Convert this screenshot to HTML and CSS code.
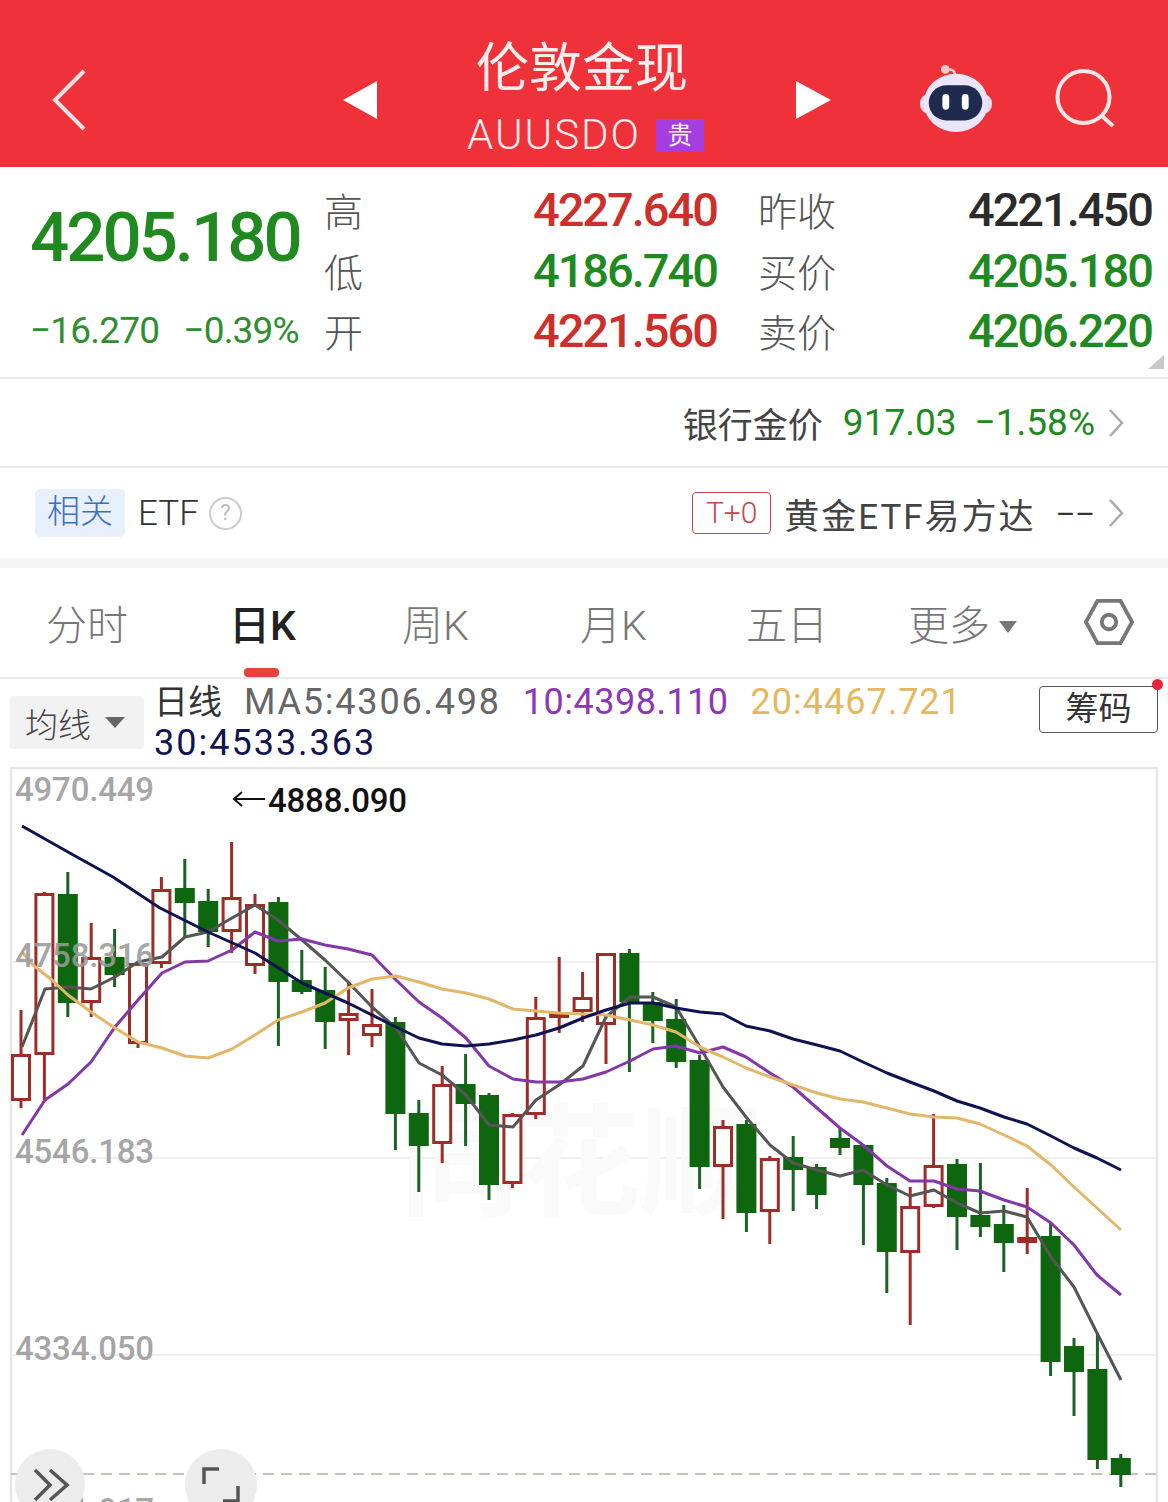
FILE: index.html
```html
<!DOCTYPE html>
<html lang="zh-CN">
  <head>
    <meta charset="UTF-8" />
    <meta name="viewport" content="width=device-width, initial-scale=1.0" />
    <title>伦敦金现</title>
    <link rel="stylesheet" href="styles.css">
  </head>
  <body>
    <div class="page">
      <div class="top-bar">
        <svg class="back-icon" viewBox="0 0 36 62"><path d="M33 2 L4 31 L33 60" /></svg>
        <svg class="nav-arrow" viewBox="0 0 34 38"><path d="M34 0 V38 L0 19 Z" /></svg>
        <div class="title-block">
          <h1>伦敦金现</h1>
          <div class="code-line">
            <span>AUUSDO</span>
            <span class="code-badge">贵</span>
          </div>
        </div>
        <svg class="nav-arrow" viewBox="0 0 35 38"><path d="M0 0 V38 L35 19 Z" /></svg>
        <svg class="robot-icon" viewBox="0 0 74 72">
          <path class="robot-antenna" d="M36 13 C36 7 32 6 27 7" />
          <circle class="robot-ball" cx="26" cy="6.5" r="4.5" />
          <rect class="robot-ear" x="0" y="32" width="74" height="20" rx="9" />
          <ellipse class="robot-head" cx="37" cy="41" rx="33" ry="30" />
          <rect class="robot-face" x="9" y="23" width="55" height="36" rx="18" />
          <rect class="robot-eye" x="23" y="32" width="7" height="16" rx="3.5" />
          <rect class="robot-eye" x="43" y="32" width="7" height="16" rx="3.5" />
        </svg>
        <svg class="search-icon" viewBox="0 0 62 62"><circle cx="28.500" cy="28" r="26" /><path d="M47 47 L58 57" /></svg>
      </div>

      <div class="quote">
        <div class="quote-main">
          <div class="last-price">4205.180</div>
          <div class="change">
            <span>−16.270</span>
            <span>−0.39%</span>
          </div>
        </div>
        <div class="quote-label">高</div>
        <div class="quote-value rise">4227.640</div>
        <div class="quote-label wide">昨收</div>
        <div class="quote-value flat">4221.450</div>
        <div class="quote-label">低</div>
        <div class="quote-value fall">4186.740</div>
        <div class="quote-label wide">买价</div>
        <div class="quote-value fall">4205.180</div>
        <div class="quote-label">开</div>
        <div class="quote-value rise">4221.560</div>
        <div class="quote-label wide">卖价</div>
        <div class="quote-value fall">4206.220</div>
        <span class="corner-mark"></span>
      </div>

      <div class="info-row bank-row">
        <span class="info-name">银行金价</span>
        <span class="bank-num fall">917.03</span>
        <span class="bank-num fall">−1.58%</span>
        <svg class="row-chevron" viewBox="0 0 16 30"><path d="M2 2 L14 15 L2 28" /></svg>
      </div>

      <div class="info-row etf-row">
        <span class="tag">相关</span>
        <span class="etf-name">ETF</span>
        <span class="help-mark">?</span>
        <span class="t-zero">T+0</span>
        <span class="info-name fund-name">黄金ETF易方达</span>
        <span class="fund-dash">––</span>
        <svg class="row-chevron" viewBox="0 0 16 30"><path d="M2 2 L14 15 L2 28" /></svg>
      </div>

      <div class="tabs">
        <span class="tab tab-time">分时</span>
        <span class="tab tab-day active">日K</span>
        <span class="tab tab-week">周K</span>
        <span class="tab tab-month">月K</span>
        <span class="tab tab-five">五日</span>
        <span class="tab tab-more">更多<i class="more-caret"></i></span>
        <svg class="gear-icon" viewBox="0 0 52 48">
          <path d="M14 2 H38 L50 24 L38 46 H14 L2 24 Z" />
          <circle cx="26" cy="24" r="7.500" />
        </svg>
      </div>

      <div class="legend">
        <div class="ma-select">均线<i class="ma-caret"></i></div>
        <div class="legend-text">
          <span class="legend-name">日线</span>
          <span class="ma5">MA5:4306.498</span>
          <span class="ma10">10:4398.110</span>
          <span class="ma20">20:4467.721</span>
          <span class="ma30">30:4533.363</span>
        </div>
        <div class="chip-btn">筹码</div>
      </div>

      <svg class="chart" viewBox="0 767 1168 735">
        <path class="frame" d="M11 1502 V768 H1157 V1502" />
        <path class="grid" d="M11 962 H1157 M11 1158 H1157 M11 1355 H1157" />
        <text class="watermark" x="400" y="1206">同花顺</text>
        <path class="dash" d="M11 1474 H1157" />

        <path class="wick-red" d="M21 1010V1108M44.400 892V1100M91.200 923V1017M138 962V1048M161.400 877V968M231.600 842V953M255 894V974M348.600 982V1055M372 989V1047M442.200 1066V1163M512.400 1113V1188M535.800 997V1119M559.200 957V1033M582.600 972V1022M606 953V1064M723 1120V1219M769.800 1156V1244M910.200 1187V1325M933.600 1114V1208M1027.200 1188V1254" />
        <path class="wick-green" d="M67.800 872V1017M114.600 929V987M184.800 859V937M208.200 889V947M278.400 897V1046M301.800 950V994M325.200 967V1049M395.400 1017V1150M418.800 1100V1192M465.600 1054V1146M489 1093V1200M629.400 949V1072M652.800 992V1043M676.200 999V1068M699.600 1055V1189M746.400 1120V1232M793.200 1136V1211M816.600 1164V1209M840 1128V1155M863.400 1145V1245M886.800 1178V1293M957 1159V1250M980.400 1163V1237M1003.800 1205V1272M1050.600 1223V1376M1074 1338V1416M1097.400 1333V1469M1120.800 1454V1487" />

        <g class="body-red">
          <rect x="12.500" y="1055.500" width="17" height="44" />
          <rect x="35.900" y="894.500" width="17" height="159" />
          <rect x="82.700" y="958.500" width="17" height="43" />
          <rect x="129.500" y="964.500" width="17" height="78" />
          <rect x="152.900" y="890.500" width="17" height="72" />
          <rect x="223.100" y="898.500" width="17" height="32" />
          <rect x="246.500" y="905.500" width="17" height="59" />
          <rect x="340.100" y="1014.500" width="17" height="5" />
          <rect x="363.500" y="1025.500" width="17" height="9" />
          <rect x="433.700" y="1085.500" width="17" height="57" />
          <rect x="503.900" y="1115.500" width="17" height="67" />
          <rect x="527.300" y="1018.500" width="17" height="95" />
          <rect x="550.700" y="1013.500" width="17" height="3" />
          <rect x="574.100" y="998.500" width="17" height="12" />
          <rect x="597.500" y="954.500" width="17" height="69" />
          <rect x="714.500" y="1127.500" width="17" height="38" />
          <rect x="761.300" y="1159.500" width="17" height="51" />
          <rect x="901.700" y="1207.500" width="17" height="44" />
          <rect x="925.100" y="1166.500" width="17" height="39" />
          <rect x="1018.700" y="1238.500" width="17" height="3" />
        </g>
        <g class="body-green">
          <rect x="57.800" y="894" width="20" height="109" />
          <rect x="104.600" y="957" width="20" height="18" />
          <rect x="174.800" y="888" width="20" height="15" />
          <rect x="198.200" y="901" width="20" height="31" />
          <rect x="268.400" y="902" width="20" height="80" />
          <rect x="291.800" y="980" width="20" height="12" />
          <rect x="315.200" y="990" width="20" height="32" />
          <rect x="385.400" y="1022" width="20" height="92" />
          <rect x="408.800" y="1113" width="20" height="33" />
          <rect x="455.600" y="1084" width="20" height="20" />
          <rect x="479" y="1095" width="20" height="90" />
          <rect x="619.400" y="953" width="20" height="49" />
          <rect x="642.800" y="1002" width="20" height="19" />
          <rect x="666.200" y="1019" width="20" height="43" />
          <rect x="689.600" y="1060" width="20" height="107" />
          <rect x="736.400" y="1124" width="20" height="89" />
          <rect x="783.200" y="1157" width="20" height="13" />
          <rect x="806.600" y="1167" width="20" height="28" />
          <rect x="830" y="1138" width="20" height="10" />
          <rect x="853.400" y="1145" width="20" height="40" />
          <rect x="876.800" y="1183" width="20" height="69" />
          <rect x="947" y="1164" width="20" height="53" />
          <rect x="970.400" y="1215" width="20" height="12" />
          <rect x="993.800" y="1224" width="20" height="19" />
          <rect x="1040.600" y="1236" width="20" height="126" />
          <rect x="1064" y="1346" width="20" height="26" />
          <rect x="1087.400" y="1369" width="20" height="91" />
          <rect x="1110.800" y="1458" width="20" height="17" />
        </g>

        <polyline class="line line-ma5" points="22,1047 45,989 68,987 91,989 115,977 138,962 162,957 185,937 208,932 232,918 255,905 278,920 302,940 325,960 348,982 372,1007 396,1028 419,1063 442,1075 466,1095 489,1125 513,1127 536,1100 559,1085 583,1066 606,1017 630,997 653,997 676,1007 700,1047 723,1087 746,1117 770,1145 793,1163 817,1170 840,1176 863,1170 887,1185 910,1196 934,1190 957,1203 980,1213 1004,1211 1027,1217 1051,1257 1074,1287 1097,1333 1121,1380" />
        <polyline class="line line-ma10" points="22,1135 45,1100 68,1084 91,1062 115,1027 138,1000 162,973 185,962 208,961 232,950 255,932 278,941 302,939 325,945 348,949 372,955 396,980 419,1002 442,1018 466,1038 489,1066 513,1079 536,1082 559,1082 583,1079 606,1072 630,1061 653,1049 676,1046 700,1053 723,1047 746,1057 770,1073 793,1087 817,1108 840,1128 863,1145 887,1166 910,1181 934,1181 957,1189 980,1191 1004,1200 1027,1207 1051,1223 1074,1245 1097,1275 1121,1295" />
        <polyline class="line line-ma20" points="22,952 33,965 52,980 68,995 91,1012 115,1028 138,1042 162,1048 185,1056 208,1058 232,1049 255,1035 278,1020 302,1012 325,1003 348,988 372,979 396,976 419,982 442,989 466,993 489,999 513,1009 536,1011 559,1013 583,1014 606,1015 630,1020 653,1025 676,1032 700,1047 723,1057 746,1068 770,1077 793,1085 817,1093 840,1099 863,1102 887,1108 910,1114 934,1117 957,1118 980,1124 1004,1135 1027,1146 1051,1165 1074,1187 1097,1208 1121,1230" />
        <polyline class="line line-ma30" points="22,826 68,852 113,877 160,908 208,932 255,953 302,983 348,1003 396,1027 419,1038 442,1044 466,1046 489,1044 513,1040 536,1035 559,1028 583,1018 606,1010 630,1003 653,1003 676,1008 700,1012 723,1014 746,1026 770,1031 793,1039 817,1045 840,1051 863,1062 887,1073 910,1082 934,1091 957,1101 980,1108 1004,1117 1027,1124 1051,1136 1074,1148 1097,1158 1121,1170" />

        <text class="axis" x="15" y="801">4970.449</text>
        <text class="axis" x="15" y="967">4758.316</text>
        <text class="axis" x="15" y="1163">4546.183</text>
        <text class="axis" x="15" y="1360">4334.050</text>
        <text class="axis" x="15" y="1522">4121.917</text>

        <path class="high-arrow" d="M265 799 H234 M242 792 L234 799 L242 806" />
        <text class="high-label" x="268" y="812">4888.090</text>

        <circle class="round-btn" cx="50" cy="1484" r="35" />
        <path class="round-icon" d="M35 1470 L50 1485 L35 1500 M50 1470 L67 1485 L50 1500" />
        <circle class="round-btn" cx="221" cy="1485" r="36" />
        <path class="round-icon" d="M204 1484 V1469 H219 M238 1486 V1501 H223" />
      </svg>
    </div>
  </body>
</html>
```

FILE: styles.css
```css
:root {
  --rise-color: #cf2f2b;
  --fall-color: #208a20;
  --label-color: #555;
  --line-color: #e9e9e9;
  --sans: Roboto, "Noto Sans CJK SC", sans-serif;
}

* {
  margin: 0;
  padding: 0;
  box-sizing: border-box;
}

body {
  width: 1168px;
  height: 1502px;
  overflow: hidden;
  background-color: white;
  font-family: var(--sans);
}

.page {
  display: flex;
  flex-direction: column;
  height: 1502px;
}

.rise {
  color: var(--rise-color);
}

.fall {
  color: var(--fall-color);
}

.flat {
  color: #2b2b2b;
}

/* top bar */
.top-bar {
  height: 167px;
  flex-shrink: 0;
  display: grid;
  grid-template-columns: 343px 34px 419px 35px 89px 72px 63px 62px;
  align-items: center;
  padding-top: 32px;
  background-color: #ef3239;
}

.back-icon {
  width: 36px;
  height: 62px;
  margin-left: 51px;
}

.back-icon path {
  fill: none;
  stroke: #fde4e4;
  stroke-width: 4;
}

.nav-arrow {
  height: 38px;
  fill: #fff;
}

.title-block {
  margin-top: -8px;
  padding-right: 9px;
  text-align: center;
  color: #fdeeee;
}

.title-block h1 {
  font-size: 53px;
  line-height: 72px;
  font-weight: 400;
}

.code-line {
  display: flex;
  justify-content: center;
  align-items: center;
  gap: 15px;
  margin: 7px 0 0 7px;
  font-size: 42px;
  line-height: 46px;
  font-weight: 300;
  letter-spacing: 2px;
}

.code-badge {
  width: 48px;
  height: 33px;
  background-color: #a63de0;
  text-align: center;
  font-size: 25px;
  line-height: 33px;
  font-weight: 400;
  letter-spacing: 0;
}

.robot-icon {
  grid-column: 6;
  width: 72px;
  height: 72px;
  margin-top: -4px;
}

.robot-antenna {
  fill: none;
  stroke: #f9c9cb;
  stroke-width: 2.500;
}

.robot-ball {
  fill: #f9c9cb;
}

.robot-ear {
  fill: #f2d9ee;
}

.robot-head {
  fill: #e9e5fb;
}

.robot-face {
  fill: #1f2a4f;
}

.robot-eye {
  fill: #fff;
}

.search-icon {
  grid-column: 8;
  width: 62px;
  height: 62px;
  fill: none;
  stroke: #ffe7e7;
  stroke-width: 4;
}

/* quote block */
.quote {
  position: relative;
  height: 212px;
  flex-shrink: 0;
  display: grid;
  grid-template-columns: 294px 100px 293px 100px 335px;
  grid-auto-rows: 60.500px;
  align-items: center;
  padding: 13px 16px 0 30px;
  border-bottom: 2px solid var(--line-color);
}

.quote-main {
  grid-row: 1 / span 3;
  align-self: stretch;
}

.last-price {
  margin-top: 22px;
  font-size: 69px;
  line-height: 72px;
  font-weight: 500;
  letter-spacing: -3px;
  color: var(--fall-color);
}

.change {
  display: flex;
  gap: 24px;
  margin-top: 35px;
  font-size: 37px;
  line-height: 44px;
  letter-spacing: -0.800px;
  color: #2f8f2f;
}

.quote-label {
  margin-top: 6px;
  font-size: 39px;
  line-height: 50px;
  font-weight: 300;
  color: var(--label-color);
}

.quote-label.wide {
  padding-left: 41px;
  white-space: nowrap;
}

.quote-value {
  text-align: right;
  font-size: 47px;
  line-height: 56px;
  font-weight: 500;
  letter-spacing: -2px;
}

.corner-mark {
  position: absolute;
  right: 4px;
  bottom: 8px;
  border-left: 16px solid transparent;
  border-bottom: 14px solid #c9c9c9;
}

/* bank and etf rows */
.info-row {
  display: flex;
  align-items: center;
  flex-shrink: 0;
  padding-right: 44px;
}

.bank-row {
  height: 89px;
  justify-content: flex-end;
  border-bottom: 2px solid var(--line-color);
}

.info-name {
  font-size: 35px;
  color: #444;
}

.bank-num {
  margin-left: 20px;
  font-size: 37px;
}

.bank-num + .bank-num {
  margin-left: 18px;
}

.row-chevron {
  width: 16px;
  height: 30px;
  margin-left: 13px;
  fill: none;
  stroke: #aaa;
  stroke-width: 2.500;
}

.etf-row {
  height: 100px;
  padding-left: 35px;
  border-bottom: 10px solid #f5f5f5;
}

.tag {
  width: 90px;
  height: 48px;
  border-radius: 5px;
  background-color: #e8f0fb;
  color: #3a6fc0;
  text-align: center;
  font-size: 33px;
  line-height: 46px;
  font-weight: 300;
}

.etf-name {
  margin-left: 13px;
  font-size: 35px;
  font-weight: 300;
  color: #333;
}

.help-mark {
  width: 33px;
  height: 33px;
  margin-left: 10px;
  margin-right: auto;
  border: 2px solid #ccc;
  border-radius: 50%;
  color: #bbb;
  text-align: center;
  font-size: 22px;
  line-height: 28px;
}

.t-zero {
  width: 79px;
  height: 42px;
  border: 1px solid #c8474c;
  border-radius: 4px;
  color: #c8474c;
  text-align: center;
  font-size: 30px;
  line-height: 39px;
  font-weight: 300;
}

.fund-name {
  margin-left: 13px;
  letter-spacing: 2px;
  white-space: nowrap;
}

.fund-dash {
  margin-left: 20px;
  font-size: 30px;
  color: #333;
}

/* period tabs */
.tabs {
  position: relative;
  height: 111px;
  flex-shrink: 0;
  display: grid;
  grid-template-columns: 183px 173px 178px 166px 162px 176px 50px;
  align-items: center;
  padding: 0 34px 1px 46px;
  border-bottom: 2px solid var(--line-color);
}

.tab {
  font-size: 41px;
  font-weight: 300;
  color: #777;
  white-space: nowrap;
}

.tab.active {
  font-weight: 500;
  color: #222;
}

.tab.active::after {
  content: "";
  position: absolute;
  left: 244px;
  bottom: 0;
  width: 35px;
  height: 9px;
  border-radius: 4px;
  background-color: #e8403a;
}

.more-caret {
  display: inline-block;
  margin-left: 9px;
  vertical-align: 7px;
  border-left: 9px solid transparent;
  border-right: 9px solid transparent;
  border-top: 12px solid #777;
}

.gear-icon {
  width: 50px;
  height: 48px;
  fill: none;
  stroke: #777;
  stroke-width: 4;
}

/* legend above the chart */
.legend {
  position: relative;
  height: 88px;
  flex-shrink: 0;
  display: flex;
  align-items: flex-start;
  padding-left: 10px;
}

.ma-select {
  display: flex;
  align-items: center;
  width: 134px;
  height: 53px;
  margin-top: 17px;
  padding-left: 15px;
  border-radius: 3px;
  background-color: #f2f2f2;
  font-size: 33px;
  font-weight: 300;
  color: #444;
}

.ma-caret {
  margin-left: 14px;
  border-left: 10px solid transparent;
  border-right: 10px solid transparent;
  border-top: 11px solid #666;
}

.legend-text {
  width: 860px;
  margin-left: 10px;
  font-size: 36px;
  line-height: 41px;
  margin-top: 3px;
}

.legend-text span {
  margin-right: 13px;
}

.legend-name {
  font-size: 34px;
  color: #333;
}

.ma5 {
  letter-spacing: 1.800px;
  color: #666;
}

.ma10 {
  letter-spacing: 0.500px;
  color: #8e36b8;
}

.ma20 {
  letter-spacing: 1px;
  color: #e5b860;
}

.ma30 {
  letter-spacing: 2px;
  color: #101450;
}

.chip-btn {
  position: absolute;
  top: 7px;
  left: 1039px;
  width: 119px;
  height: 47px;
  border: 1px solid #555;
  border-radius: 4px;
  text-align: center;
  font-size: 33px;
  line-height: 44px;
  color: #333;
}

.chip-btn::after {
  content: "";
  position: absolute;
  top: -8px;
  right: -6px;
  width: 11px;
  height: 11px;
  border-radius: 50%;
  background-color: #e8283a;
}

/* chart */
.chart {
  width: 1168px;
  height: 735px;
  flex-shrink: 0;
}

.frame {
  fill: none;
  stroke: #e6e6e6;
  stroke-width: 2.500;
}

.grid {
  fill: none;
  stroke: #ececec;
  stroke-width: 1.500;
}

.watermark {
  font-size: 120px;
  font-weight: 700;
  fill: #fafafa;
}

.axis {
  font-size: 33px;
  font-weight: 500;
  letter-spacing: -0.200px;
  fill: #9a9a9a;
  fill-opacity: 0.9;
}

.dash {
  fill: none;
  stroke: #b8afa5;
  stroke-width: 1.500;
  stroke-dasharray: 11 7;
}

.high-arrow {
  fill: none;
  stroke: #111;
  stroke-width: 2;
}

.high-label {
  font-size: 33px;
  font-weight: 500;
  letter-spacing: -0.200px;
  fill: #111;
}

.wick-red {
  fill: none;
  stroke: #9e2d27;
  stroke-width: 3;
}

.wick-green {
  fill: none;
  stroke: #1a6324;
  stroke-width: 3;
}

.body-red rect {
  fill: #fff;
  stroke: #9e2d27;
  stroke-width: 3;
}

.body-green rect {
  fill: #0e660f;
}

.line {
  fill: none;
  stroke-width: 3;
  stroke-linejoin: round;
}

.line-ma5 {
  stroke: #555;
}

.line-ma10 {
  stroke: #8337a8;
}

.line-ma20 {
  stroke: #e3b769;
}

.line-ma30 {
  stroke: #0f1250;
}

.round-btn {
  fill: #ececec;
}

.round-icon {
  fill: none;
  stroke: #555;
  stroke-width: 3.500;
}
```
